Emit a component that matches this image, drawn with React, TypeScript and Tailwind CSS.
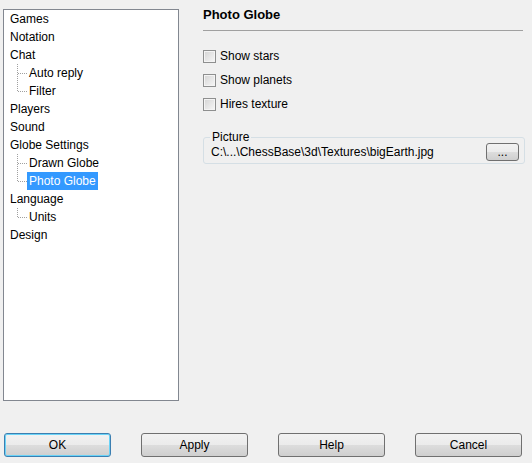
import React from 'react';

type Node = { label: string; children?: string[] };

const tree: Node[] = [
  { label: 'Games' },
  { label: 'Notation' },
  { label: 'Chat', children: ['Auto reply', 'Filter'] },
  { label: 'Players' },
  { label: 'Sound' },
  { label: 'Globe Settings', children: ['Drawn Globe', 'Photo Globe'] },
  { label: 'Language', children: ['Units'] },
  { label: 'Design' },
];

const selected = 'Photo Globe';

function Branch({ last }: { last: boolean }) {
  return (
    <svg width="23" height="18" className="shrink-0" shapeRendering="crispEdges">
      <line x1="13.5" y1="0" x2="13.5" y2={last ? 9 : 18} stroke="#a0a0a0" strokeDasharray="1 1" />
      <line x1="14" y1="9.5" x2="23" y2="9.5" stroke="#a0a0a0" strokeDasharray="1 1" />
    </svg>
  );
}

function Checkbox({ label }: { label: string }) {
  return (
    <label className="flex h-[24px] items-center gap-[4px]">
      <span className="h-[13px] w-[13px] border border-[#8e8f8f] bg-[linear-gradient(135deg,#d4d4d4,#f7f7f7)] shadow-[inset_0_0_0_1px_#f4f4f4]" />
      <span>{label}</span>
    </label>
  );
}

function Button({ label, focused, className = '' }: { label: string; focused?: boolean; className?: string }) {
  return (
    <button
      className={`flex items-center justify-center rounded-[3px] border bg-[linear-gradient(to_bottom,#f2f2f2_0%,#ebebeb_50%,#dddddd_50%,#cfcfcf_100%)] ${
        focused ? 'border-[#3c7fb1] shadow-[inset_0_0_0_1px_#6ad3f7]' : 'border-[#707070]'
      } ${className}`}
    >
      {label}
    </button>
  );
}

export default function App() {
  return (
    <div
      className="flex h-[463px] w-[532px] flex-col bg-[#f0f0f0] text-[12px] text-black"
      style={{ fontFamily: '"Liberation Sans", Arial, sans-serif' }}
    >
      <div className="flex">
        <div className="ml-[3px] mt-[9px] h-[392px] w-[176px] border border-[#828790] bg-white">
          {tree.map((n) => (
            <div key={n.label}>
              <div className="flex h-[18px] items-center pl-[6px]">{n.label}</div>
              {n.children?.map((c, i) => (
                <div key={c} className="flex h-[18px] items-center">
                  <Branch last={i === n.children!.length - 1} />
                  <span
                    className={`flex h-[18px] items-center px-[2px] ${
                      c === selected ? 'bg-[#3399ff] text-white' : ''
                    }`}
                  >
                    {c}
                  </span>
                </div>
              ))}
            </div>
          ))}
        </div>

        <div className="ml-[24px] w-[322px]">
          <div className="flex h-[30px] items-center text-[13px] font-bold">Photo Globe</div>
          <div className="h-px w-[320px] bg-[#a0a0a0]" />

          <div className="mt-[13px]">
            <Checkbox label="Show stars" />
            <Checkbox label="Show planets" />
            <Checkbox label="Hires texture" />
          </div>

          <div className="relative mt-[21px] flex h-[27px] items-center justify-between rounded-[3px] border border-[#d5dfe5] pl-[7px] pr-[5px] pt-[2px]">
            <span className="absolute left-[6px] top-[-8px] bg-[#f0f0f0] px-[2px] leading-[14px]">Picture</span>
            <span>C:\...\ChessBase\3d\Textures\bigEarth.jpg</span>
            <Button label="..." className="h-[18px] w-[33px] leading-none" />
          </div>
        </div>
      </div>

      <div className="mt-[32px] flex gap-[30px] pl-[4px]">
        <Button label="OK" focused className="h-[24px] w-[107px]" />
        <Button label="Apply" className="h-[24px] w-[107px]" />
        <Button label="Help" className="h-[24px] w-[107px]" />
        <Button label="Cancel" className="h-[24px] w-[107px]" />
      </div>
    </div>
  );
}
